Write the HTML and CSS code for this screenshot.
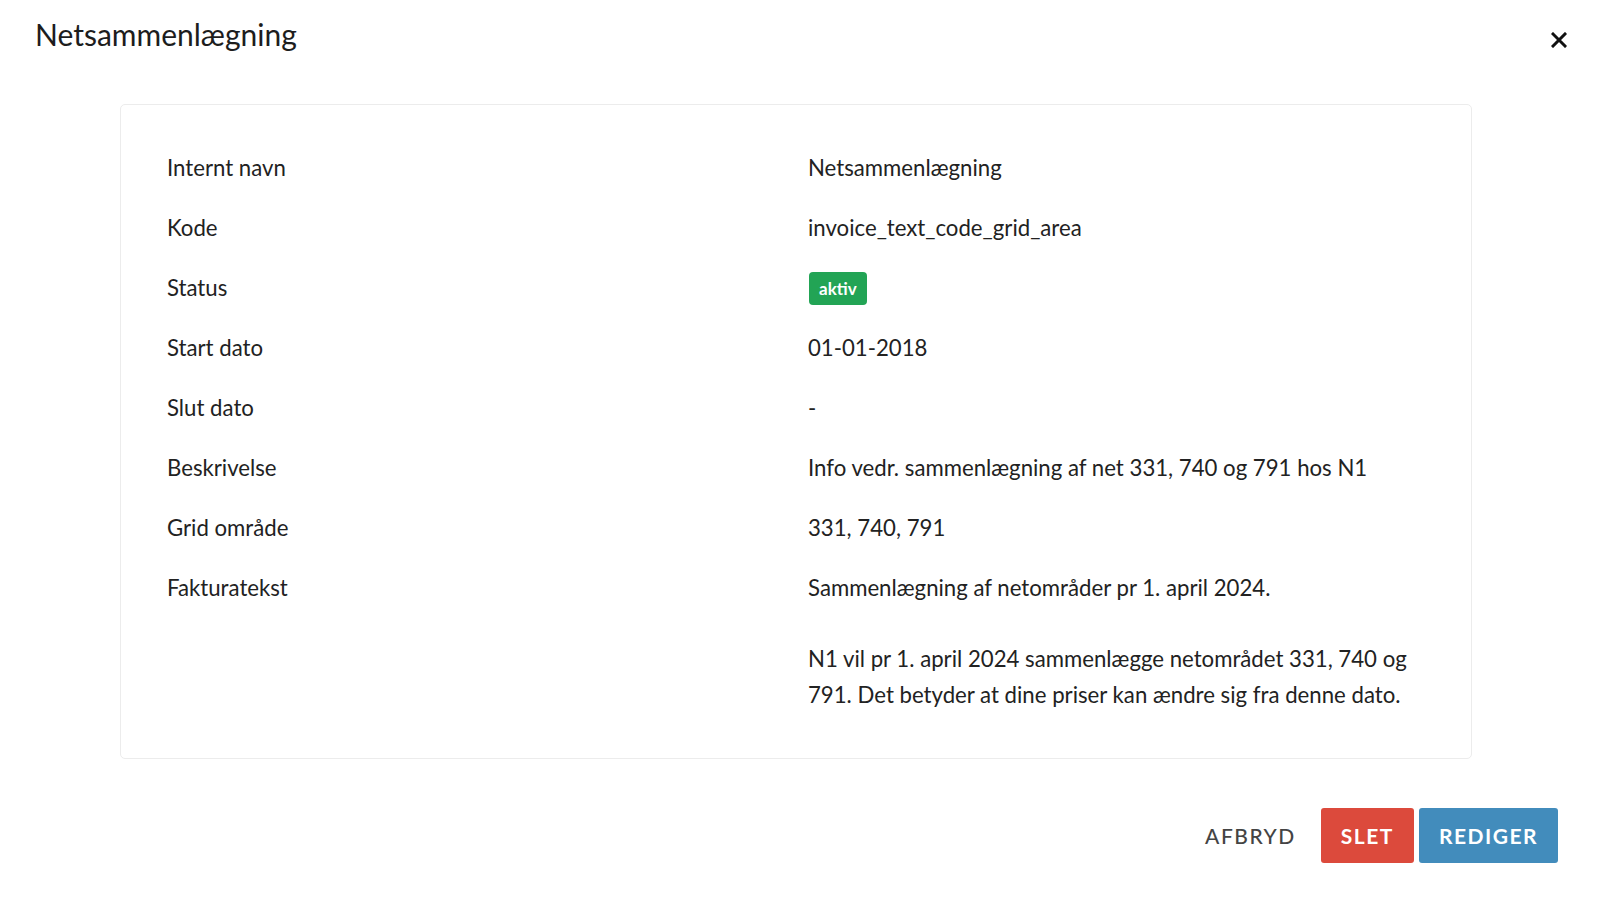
FILE: index.html
```html
<!DOCTYPE html>
<html lang="da">
<head>
<meta charset="utf-8">
<title>Netsammenlægning</title>
<link rel="stylesheet" href="styles.css">
</head>
<body>
<div class="dialog">
  <header class="dialog-header">
    <h1 class="dialog-title">Netsammenlægning</h1>
    <button class="close-btn" aria-label="Luk">
      <svg width="16" height="16" viewBox="0 0 16 16"><path d="M2 2 L14 14 M14 2 L2 14" stroke="#111" stroke-width="3" stroke-linecap="square"/></svg>
    </button>
  </header>
  <section class="card">
    <dl class="details">
      <dt>Internt navn</dt><dd>Netsammenlægning</dd>
      <dt>Kode</dt><dd>invoice_text_code_grid_area</dd>
      <dt>Status</dt><dd><span class="badge">aktiv</span></dd>
      <dt>Start dato</dt><dd>01-01-2018</dd>
      <dt>Slut dato</dt><dd>-</dd>
      <dt>Beskrivelse</dt><dd>Info vedr. sammenlægning af net 331, 740 og 791 hos N1</dd>
      <dt>Grid område</dt><dd>331, 740, 791</dd>
      <dt>Fakturatekst</dt><dd class="multiline"><p>Sammenlægning af netområder pr 1. april 2024.</p><p>N1 vil pr 1. april 2024 sammenlægge netområdet 331, 740 og 791. Det betyder at dine priser kan ændre sig fra denne dato.</p></dd>
    </dl>
  </section>
  <footer class="actions">
    <button class="btn btn-text">AFBRYD</button>
    <button class="btn btn-danger">SLET</button>
    <button class="btn btn-primary">REDIGER</button>
  </footer>
</div>
</body>
</html>
```
FILE: styles.css
```css
* { box-sizing: border-box; }
html, body { margin: 0; padding: 0; background: #fff; }
body {
  font-family: Lato, "Open Sans", sans-serif;
  color: #222;
}
.dialog { width: 1600px; height: 897px; }
.dialog-header {
  display: flex;
  justify-content: space-between;
  align-items: flex-start;
  padding: 15px 33px 0 35px;
  height: 104px;
}
.dialog-title {
  margin: 0;
  font-weight: 400;
  font-size: 30px;
  line-height: 38px;
  color: #1d1d1d;
}
.close-btn {
  border: 0;
  background: none;
  padding: 0;
  margin-top: 17px;
  width: 16px;
  height: 16px;
  display: flex;
}
.card {
  margin-left: 120px;
  width: 1352px;
  border: 1px solid #ececec;
  border-radius: 5px;
  padding: 33px 46px;
}
.details {
  margin: 0;
  display: grid;
  grid-template-columns: 641px 1fr;
  font-size: 22.2px;
  line-height: 36px;
}
.details dt, .details dd {
  margin: 0;
  padding: 12px 0;
  min-height: 60px;
}
.details dd { display: flex; align-items: center; }
.details dd.multiline { display: block; }
.details dd p { margin: 0; }
.details dd p + p { margin-top: 35px; }
.badge {
  display: inline-block;
  background: #22a455;
  color: #fff;
  font-weight: 700;
  font-size: 17px;
  line-height: 33px;
  height: 33px;
  padding: 0 10px;
  border-radius: 4px;
  margin-left: 1px;
}
.actions {
  display: flex;
  justify-content: flex-end;
  gap: 5px;
  padding: 49px 42px 0 0;
}
.btn {
  border: 0;
  font-family: inherit;
  font-size: 21px;
  font-weight: 700;
  letter-spacing: 1.5px;
  height: 55px;
  padding: 0 20px;
  border-radius: 3px;
  color: #fff;
}
.btn-text { background: none; color: #444; font-weight: 500; }
.btn-danger { background: #dc4a3c; }
.btn-primary { background: #428cbc; }
```
